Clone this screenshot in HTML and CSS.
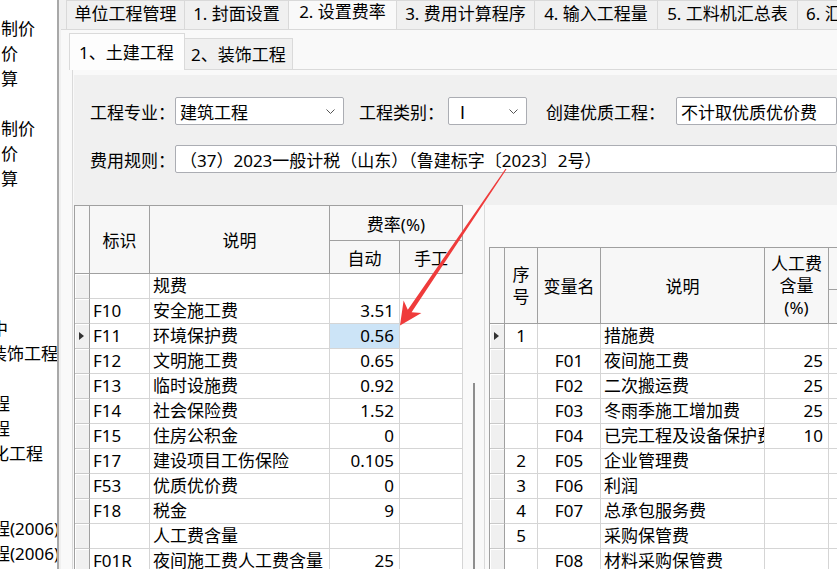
FILE: index.html
```html
<!DOCTYPE html>
<html lang="zh-CN">
<head>
<meta charset="utf-8">
<title>设置费率</title>
<link rel="stylesheet" href="styles.css">
</head>
<body>
<div class="app">
  <aside class="tree">
    <div class="node">制价</div>
    <div class="node">价</div>
    <div class="node">算</div>
    <div class="node"></div>
    <div class="node">制价</div>
    <div class="node">价</div>
    <div class="node">算</div>
    <div class="node"></div>
    <div class="node"></div>
    <div class="node"></div>
    <div class="node"></div>
    <div class="node"></div>
    <div class="node cut9">中</div>
    <div class="node cut10">装饰工程</div>
    <div class="node"></div>
    <div class="node cut7">程</div>
    <div class="node cut7">程</div>
    <div class="node cut8">化工程</div>
    <div class="node"></div>
    <div class="node"></div>
    <div class="node cut7">程(2006)</div>
    <div class="node cut7">程(2006)</div>
  </aside>

  <main class="main">
    <nav class="tabs">
      <div class="tab t1">单位工程管理</div>
      <div class="tab t2">1. 封面设置</div>
      <div class="tab t3 active">2. 设置费率</div>
      <div class="tab t4">3. 费用计算程序</div>
      <div class="tab t5">4. 输入工程量</div>
      <div class="tab t6">5. 工料机汇总表</div>
      <div class="tab t7">6. 汇总分析</div>
    </nav>

    <section class="panel">
      <div class="subtabs">
        <div class="stab active">1、土建工程</div>
        <div class="stab">2、装饰工程</div>
      </div>

      <div class="subpanel">
        <div class="form">
          <div class="frow">
            <span class="lbl">工程专业：</span>
            <div class="sel sel-major">建筑工程<svg class="chev" viewBox="0 0 9 5"><polyline points="0.5,0.5 4.5,4.5 8.5,0.5"/></svg></div>
            <span class="lbl lbl-type">工程类别：</span>
            <div class="sel sel-type">Ⅰ<svg class="chev" viewBox="0 0 9 5"><polyline points="0.5,0.5 4.5,4.5 8.5,0.5"/></svg></div>
            <span class="lbl lbl-qual">创建优质工程：</span>
            <div class="sel sel-qual">不计取优质优价费</div>
          </div>
          <div class="frow">
            <span class="lbl">费用规则：</span>
            <div class="sel sel-rule">（37）2023一般计税（山东）（鲁建标字〔2023〕2号）</div>
          </div>
        </div>

        <div class="grids">
          <div class="lwrap">
            <div class="grid lgrid">
              <div class="h rh span2"></div>
              <div class="h span2">标识</div>
              <div class="h span2">说明</div>
              <div class="h cspan2">费率(%)</div>
              <div class="h">自动</div>
              <div class="h">手工</div>

              <div class="rh"></div><div class="c"></div><div class="c l">规费</div><div class="c r"></div><div class="c"></div>
              <div class="rh"></div><div class="c l">F10</div><div class="c l">安全施工费</div><div class="c r">3.51</div><div class="c"></div>
              <div class="rh cur"></div><div class="c l">F11</div><div class="c l">环境保护费</div><div class="c r sel-cell">0.56</div><div class="c"></div>
              <div class="rh"></div><div class="c l">F12</div><div class="c l">文明施工费</div><div class="c r">0.65</div><div class="c"></div>
              <div class="rh"></div><div class="c l">F13</div><div class="c l">临时设施费</div><div class="c r">0.92</div><div class="c"></div>
              <div class="rh"></div><div class="c l">F14</div><div class="c l">社会保险费</div><div class="c r">1.52</div><div class="c"></div>
              <div class="rh"></div><div class="c l">F15</div><div class="c l">住房公积金</div><div class="c r">0</div><div class="c"></div>
              <div class="rh"></div><div class="c l">F17</div><div class="c l">建设项目工伤保险</div><div class="c r">0.105</div><div class="c"></div>
              <div class="rh"></div><div class="c l">F53</div><div class="c l">优质优价费</div><div class="c r">0</div><div class="c"></div>
              <div class="rh"></div><div class="c l">F18</div><div class="c l">税金</div><div class="c r">9</div><div class="c"></div>
              <div class="rh"></div><div class="c"></div><div class="c l">人工费含量</div><div class="c r"></div><div class="c"></div>
              <div class="rh"></div><div class="c l">F01R</div><div class="c l">夜间施工费人工费含量</div><div class="c r">25</div><div class="c"></div>
            </div>
          </div>
          <div class="vscroll"><div class="thumb"></div></div>
          <div class="vdiv"></div>
          <div class="rwrap">
            <div class="grid rgrid">
              <div class="h rh span2"></div>
              <div class="h span2 stack">序<br>号</div>
              <div class="h span2">变量名</div>
              <div class="h span2">说明</div>
              <div class="h span2 stack">人工费<br>含量<br>(%)</div>
              <div class="h"></div>
              <div class="h"></div>

              <div class="rh cur"></div><div class="c m">1</div><div class="c m"></div><div class="c l">措施费</div><div class="c r"></div><div class="c"></div>
              <div class="rh"></div><div class="c m"></div><div class="c m">F01</div><div class="c l">夜间施工费</div><div class="c r">25</div><div class="c"></div>
              <div class="rh"></div><div class="c m"></div><div class="c m">F02</div><div class="c l">二次搬运费</div><div class="c r">25</div><div class="c"></div>
              <div class="rh"></div><div class="c m"></div><div class="c m">F03</div><div class="c l">冬雨季施工增加费</div><div class="c r">25</div><div class="c"></div>
              <div class="rh"></div><div class="c m"></div><div class="c m">F04</div><div class="c l">已完工程及设备保护费</div><div class="c r">10</div><div class="c"></div>
              <div class="rh"></div><div class="c m">2</div><div class="c m">F05</div><div class="c l">企业管理费</div><div class="c r"></div><div class="c"></div>
              <div class="rh"></div><div class="c m">3</div><div class="c m">F06</div><div class="c l">利润</div><div class="c r"></div><div class="c"></div>
              <div class="rh"></div><div class="c m">4</div><div class="c m">F07</div><div class="c l">总承包服务费</div><div class="c r"></div><div class="c"></div>
              <div class="rh"></div><div class="c m">5</div><div class="c m"></div><div class="c l">采购保管费</div><div class="c r"></div><div class="c"></div>
              <div class="rh"></div><div class="c m"></div><div class="c m">F08</div><div class="c l">材料采购保管费</div><div class="c r"></div><div class="c"></div>
            </div>
          </div>
        </div>
      </div>
    </section>
  </main>
</div>

<svg class="arrow" viewBox="0 0 837 569" width="837" height="569">
  <polygon points="506.5,169.3 411.6,312.3 421.4,312.9 400,325.5 403.6,300.6 407.8,309.7 505.5,168.7"/>
</svg>
</body>
</html>
```

FILE: styles.css
```css
* { box-sizing: border-box; margin: 0; padding: 0; }

html, body {
  width: 837px;
  height: 569px;
  overflow: hidden;
}

body {
  font-family: "Noto Sans", "Noto Sans CJK SC", sans-serif;
  font-size: 17px;
  color: #000;
  background: #f0f0f0;
  position: relative;
}

.app {
  display: flex;
  height: 569px;
}

/* ---------- left tree ---------- */
.tree {
  width: 59px;
  flex: none;
  background: #fff;
  border-right: 2px solid #a8a8a8;
  padding-top: 16px;
  overflow: hidden;
  white-space: nowrap;
}
.node {
  height: 25px;
  line-height: 25px;
  padding-left: 1px;
}
.cut7 { margin-left: -8px; }
.cut8 { margin-left: -9px; }
.cut9 { margin-left: -10px; }
.cut10 { margin-left: -11px; }

/* ---------- main ---------- */
.main {
  flex: 1;
  min-width: 0;
  display: flex;
  flex-direction: column;
  background: #f0f0f0;
  padding-left: 2px;
}

.tabs {
  display: flex;
  height: 29px;
  flex: none;
  padding-left: 5px;
  overflow: hidden;
}
.tab {
  flex: none;
  height: 29px;
  line-height: 26px;
  text-align: center;
  white-space: nowrap;
  background: #f0f0f0;
  border: 1px solid #d9d9d9;
  border-left: none;
  border-bottom: none;
  overflow: hidden;
}
.tab.t1 { width: 119px; border-left: 1px solid #d9d9d9; }
.tab.t2 { width: 104px; }
.tab.t3 { width: 108px; }
.tab.t4 { width: 138px; }
.tab.t5 { width: 123px; }
.tab.t6 { width: 140px; }
.tab.t7 { width: 100px; text-align: left; padding-left: 8px; }
.tab.active {
  background: #f9f9f9;
  line-height: 21px;
  height: 30px;
  margin-bottom: -1px;
  position: relative;
}

.panel {
  flex: 1;
  min-height: 0;
  display: flex;
  flex-direction: column;
  background: #f9f9f9;
  border-top: 1px solid #d9d9d9;
  padding: 3px 0 0 11px;
}

.subtabs {
  display: flex;
  align-items: flex-end;
  height: 36px;
  flex: none;
}
.stab {
  height: 31px;
  line-height: 31px;
  width: 108px;
  padding-left: 6px;
  white-space: nowrap;
  background: #f0f0f0;
  border: 1px solid #dadada;
  border-left: none;
  border-bottom: none;
}
.stab.active {
  height: 37px;
  line-height: 38px;
  width: 116px;
  margin-left: -3px;
  margin-bottom: -1px;
  padding-left: 9px;
  background: #fdfdfd;
  border-left: 1px solid #dadada;
  position: relative;
}

.subpanel {
  flex: 1;
  min-height: 0;
  display: flex;
  flex-direction: column;
  border-top: 1px solid #dadada;
  border-left: 1px solid #dadada;
  padding: 5px 0 0 1px;
}

/* ---------- form ---------- */
.form {
  height: 130px;
  flex: none;
  background: #f0f0f0;
  padding: 22px 0 0 16px;
  overflow: hidden;
}
.frow {
  display: flex;
  align-items: center;
  height: 28px;
  white-space: nowrap;
}
.frow + .frow { margin-top: 20px; }
.lbl { flex: none; width: 85px; }
.lbl-type { margin-left: 15px; width: 89px; }
.lbl-qual { margin-left: 19px; width: 130px; }

.sel {
  flex: none;
  height: 28px;
  display: flex;
  align-items: center;
  padding-left: 4px;
  background: #fff;
  border: 1px solid #abadb3;
  border-radius: 2px;
  position: relative;
  overflow: hidden;
  white-space: nowrap;
}
.sel-major { width: 169px; }
.sel-type { width: 79px; padding-left: 5px; }
.sel-qual { flex: 1; min-width: 0; }
.sel-rule { flex: 1; min-width: 0; }

.chev {
  position: absolute;
  right: 8px;
  top: 11px;
  width: 9px;
  height: 5px;
  fill: none;
  stroke: #555;
  stroke-width: 1;
}

/* ---------- grids ---------- */
.grids {
  flex: 1;
  min-height: 0;
  display: flex;
  overflow: hidden;
}
.lwrap { width: 389px; flex: none; }
.vscroll {
  width: 21px;
  flex: none;
  padding: 178px 0 0 10px;
}
.thumb {
  width: 2px;
  height: 100%;
  background: #8e8e8e;
}
.vdiv { width: 1px; flex: none; background: #dadada; }
.rwrap {
  flex: 1;
  min-width: 0;
  padding: 42px 0 0 4px;
  overflow: hidden;
}

.grid {
  display: grid;
  grid-auto-rows: 25px;
  background: #fff;
  border-left: 1px solid #a0a0a0;
  border-top: 1px solid #a0a0a0;
}
.lgrid {
  grid-template-columns: 15px 60px 180px 70px 63px;
  grid-template-rows: 35px 33px;
}
.rgrid {
  grid-template-columns: 15px 33px 63px 164px 64px 80px;
  grid-template-rows: 42px 34px;
  width: 419px;
}

.h {
  background: #f7f7f7;
  border-right: 1px solid #a0a0a0;
  border-bottom: 1px solid #a0a0a0;
  display: flex;
  align-items: center;
  justify-content: center;
  text-align: center;
  white-space: nowrap;
  overflow: hidden;
}
.h.span2 { grid-row: span 2; }
.h.cspan2 { grid-column: span 2; }
.h.stack { line-height: 22px; }

.rh {
  background: #f0f0f0;
  border-right: 1px solid #a0a0a0;
  border-bottom: 1px solid #c9c9c9;
  box-shadow: inset 1px 1px 0 #fff;
  position: relative;
}
.h.rh { background: #f7f7f7; border-bottom-color: #a0a0a0; box-shadow: none; }
.rh.cur::after {
  content: "";
  position: absolute;
  left: 4px;
  top: 8px;
  border-left: 5px solid #333;
  border-top: 4px solid transparent;
  border-bottom: 4px solid transparent;
}

.c {
  border-right: 1px solid #d5d5d5;
  border-bottom: 1px solid #d5d5d5;
  line-height: 24px;
  white-space: nowrap;
  overflow: hidden;
}
.c.l { padding-left: 3px; }
.c.r { text-align: right; padding-right: 5px; }
.c.m { text-align: center; }
.sel-cell { background: #cce4f7; }

/* ---------- annotation arrow ---------- */
.arrow {
  position: absolute;
  left: 0;
  top: 0;
  pointer-events: none;
}
.arrow polygon { fill: #ef3b3b; }
```
